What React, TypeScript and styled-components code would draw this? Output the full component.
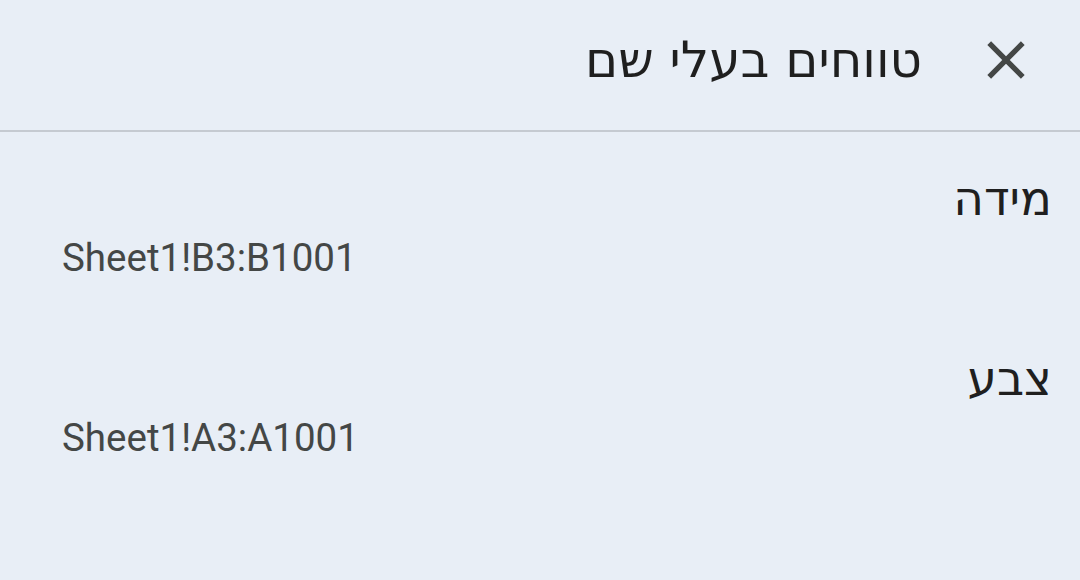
import React from "react";
import styled, { createGlobalStyle } from "styled-components";

const Global = createGlobalStyle`
  html, body { margin: 0; padding: 0; background: #e8eef6; }
  body { font-family: Roboto, "Liberation Sans", "Noto Sans", sans-serif; }
`;

const hebrewFont = `"DejaVu Sans", "Liberation Sans", sans-serif`;

const Panel = styled.div`
  direction: rtl;
  width: 1080px;
  height: 580px;
  background: #e8eef6;
  display: flex;
  flex-direction: column;
  overflow: hidden;
`;

const Header = styled.header`
  display: flex;
  align-items: center;
  height: 132px;
  box-sizing: border-box;
  padding: 0 42px 10px 0;
  border-bottom: 2px solid #c5cad1;
  gap: 52px;
`;

const CloseButton = styled.button`
  width: 64px;
  height: 64px;
  padding: 0;
  border: none;
  background: transparent;
  display: flex;
  align-items: center;
  justify-content: center;
  color: #444746;
  cursor: pointer;
`;

const Title = styled.h1`
  margin: 0;
  font-family: ${hebrewFont};
  font-size: 50px;
  font-weight: 400;
  color: #1f1f1f;
`;

const List = styled.div`
  display: flex;
  flex-direction: column;
  padding: 40px 28px 0 62px;
  gap: 70px;
`;

const Item = styled.div`
  display: flex;
  flex-direction: column;
  gap: 8px;
`;

const Label = styled.div`
  font-family: ${hebrewFont};
  font-size: 47px;
  line-height: 54px;
  color: #1f1f1f;
  text-align: right;
`;

const Value = styled.div`
  direction: ltr;
  text-align: left;
  font-size: 38.5px;
  line-height: 48px;
  color: #444746;
`;

const ranges = [
  { name: "מידה", range: "Sheet1!B3:B1001" },
  { name: "צבע", range: "Sheet1!A3:A1001" },
];

export default function App() {
  return (
    <>
      <Global />
      <Panel>
        <Header>
          <CloseButton aria-label="סגירה">
            <svg width="64" height="64" viewBox="0 0 24 24" fill="currentColor">
              <path d="M19 6.41L17.59 5 12 10.59 6.41 5 5 6.41 10.59 12 5 17.59 6.41 19 12 13.41 17.59 19 19 17.59 13.41 12z" />
            </svg>
          </CloseButton>
          <Title>טווחים בעלי שם</Title>
        </Header>
        <List>
          {ranges.map((r) => (
            <Item key={r.range}>
              <Label>{r.name}</Label>
              <Value>{r.range}</Value>
            </Item>
          ))}
        </List>
      </Panel>
    </>
  );
}
